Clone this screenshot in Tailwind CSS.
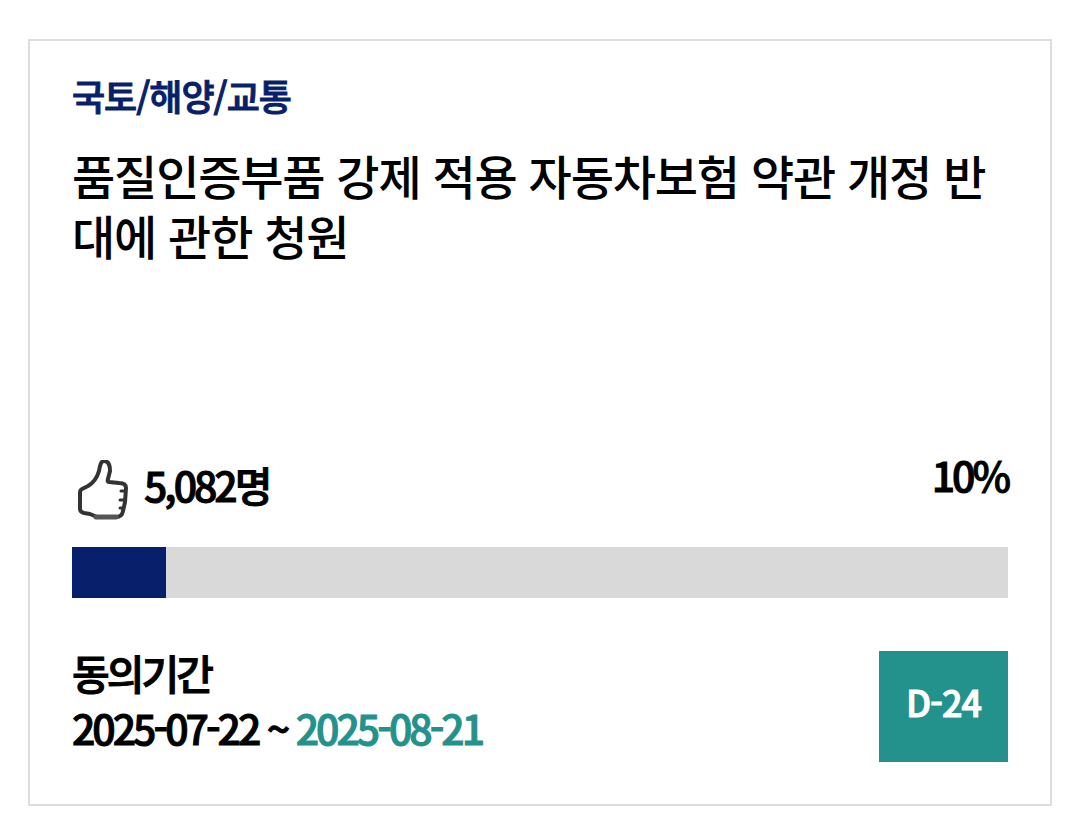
<!DOCTYPE html>
<html lang="ko">
<head>
    <meta charset="UTF-8">
    <meta name="viewport" content="width=device-width, initial-scale=1.0">
    <title>국민동의청원</title>
    <script src="https://cdn.jsdelivr.net/npm/@tailwindcss/browser@4"></script>
</head>
<body class="bg-white px-7 pt-[39px] pb-8 font-['Noto_Sans_CJK_KR',sans-serif] font-medium text-black">
    <article class="border-2 border-[#dddddd] px-[42px] pt-[30px] pb-[42px]">
        <p class="text-[36px] leading-[48px] tracking-[-1px] text-[#081f6b] [-webkit-text-stroke:1px]">국토/해양/교통</p>
        <h2 class="mt-[26px] min-h-[291px] text-[47px] leading-[60px] tracking-tight break-all">품질인증부품 강제 적용 자동차보험 약관 개정 반대에 관한 청원</h2>

        <!-- 동의 현황 -->
        <div class="mt-2 flex items-start justify-between text-[41px] leading-[60px] tracking-[-3px] [-webkit-text-stroke:1px]">
            <p class="mt-4 flex items-start gap-3 leading-[48px]">
                <svg class="ml-1 h-[60px] w-14" viewBox="0 0 56 60" fill="none" stroke="#333333" stroke-width="4" stroke-linejoin="round" stroke-linecap="round">
                    <path d="M28 1C25 1 24 5 23 11C21 18 17 23 12 26L6 29Q4 30 4 33V49Q4 52 8 53L14 54L21 57H40Q46 57 47 51L49 42L50 28Q50 23 43 23L33 22Q31 22 32 19L34 11C34 5 32 1 28 1Z"/>
                    <path d="M45 31h4M44 40h4M44 48h3" stroke-width="3"/>
                    <path d="M20 57h20" stroke="#555555" stroke-width="5"/>
                </svg>
                <span>5,082명</span>
            </p>
            <p>10%</p>
        </div>
        <div class="mt-[27px] h-[51px] bg-[#d9d9d9]">
            <div class="h-full bg-[#081f6b]" style="width: 10%"></div>
        </div>

        <!-- 동의 기간 -->
        <div class="mt-[47px] flex items-start justify-between">
            <dl class="text-[41px] leading-[55px] tracking-[-3px] [-webkit-text-stroke:1px]">
                <dt>동의기간</dt>
                <dd>2025-07-22 ~ <span class="text-[#23918c]">2025-08-21</span></dd>
            </dl>
            <span class="mt-1.5 flex h-[111px] w-[129px] items-center justify-center bg-[#23918c] pb-3 text-[36px] tracking-[-1px] text-white [-webkit-text-stroke:1px]">D-24</span>
        </div>
    </article>
</body>
</html>
